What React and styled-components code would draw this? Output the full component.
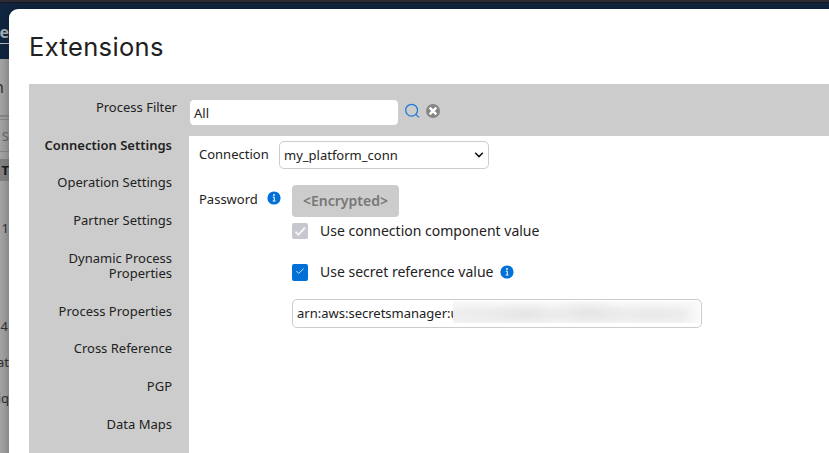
import React from "react";
import styled, { createGlobalStyle, css } from "styled-components";

const GlobalStyle = createGlobalStyle`
  * { box-sizing: border-box; }
  body { margin: 0; overflow: hidden; font-family: "Noto Sans", sans-serif; color: #222; }
`;

const Page = styled.div`
  position: relative;
  width: 829px;
  height: 453px;
  overflow: hidden;
  background: #a3a3a3;
`;

const TopBar = styled.div`
  height: 59px;
  padding-top: 22px;
  background: #10253f;
  border-top: 2px solid #2c2b36;
  box-shadow: inset 0 1px #17171b;
`;

const ActiveTab = styled.div`
  width: 9px;
  height: 20px;
  display: flex;
  justify-content: flex-end;
  border-bottom: 1px solid #b6bac0;
  color: #a7aaaf;
  font-size: 16px;
  font-weight: 700;
  line-height: 16px;
`;

const BackContent = styled.div`
  width: 9px;
  height: 394px;
  background: linear-gradient(90deg, #a3a3a3, #989898);
`;

const BackLine = styled.div`
  display: flex;
  justify-content: flex-end;
  align-items: center;
  height: ${(p) => p.$h}px;
  padding-right: ${(p) => p.$right || 0}px;
  font-size: ${(p) => p.$size || 13}px;
  font-weight: ${(p) => (p.$bold ? 700 : 400)};
  color: ${(p) => p.$color || "#303030"};
  background: ${(p) => p.$bg || "transparent"};
  ${(p) => p.$framed && css`
    border-top: 1px solid #858585;
    border-bottom: 1px solid #858585;
  `}
`;

const Dialog = styled.section`
  position: absolute;
  left: 9px;
  top: 9px;
  width: 830px;
  height: 460px;
  padding: 17px 0 0 20px;
  background: #fff;
  border-radius: 9px;
  box-shadow: 0 0 8px rgba(0, 0, 0, 0.22);
`;

const Title = styled.h1`
  margin: 0;
  height: 58px;
  font: 400 25.5px/42px Inter, sans-serif;
  letter-spacing: 0.36px;
  color: #202020;
`;

const Panel = styled.div`
  display: grid;
  grid-template-columns: 160px 1fr;
  grid-template-rows: 52px 1fr;
  height: 380px;
  background: #ccc;
`;

const FilterLabel = styled.label`
  justify-self: end;
  margin: 16px 12px 0 0;
  font-size: 13px;
  line-height: 15px;
`;

const FilterBar = styled.div`
  display: flex;
  align-items: flex-start;
  padding-top: 15px;
`;

const FilterInput = styled.div`
  width: 210px;
  height: 27px;
  padding: 2px 4px 0;
  border: 1px solid #ccc;
  border-radius: 5px;
  background: #fff;
  font-size: 13px;
  line-height: 23px;
`;

const SideNav = styled.nav`
  display: flex;
  flex-direction: column;
  align-items: flex-end;
  gap: 22.75px;
  padding: 1.6px 17px 0 0;
`;

const NavItem = styled.a`
  width: 140px;
  text-align: right;
  font-size: 13px;
  line-height: 15px;
  font-weight: ${(p) => (p.$active ? 600 : 400)};
`;

const Form = styled.main`
  padding: 5px 0 0 10px;
  background: #fff;
  font-size: 13px;
`;

const ConnectionRow = styled.div`
  display: flex;
  align-items: flex-start;
  height: 44px;
`;

const FieldLabel = styled.label`
  width: ${(p) => p.$w}px;
  padding-top: ${(p) => p.$top}px;
  line-height: 18px;
`;

const Select = styled.div`
  display: flex;
  justify-content: space-between;
  align-items: center;
  width: 210px;
  height: 28px;
  padding: 0 4px;
  border: 1px solid #ccc;
  border-radius: 5px;
  line-height: 16px;
`;

const PasswordRow = styled.div`
  display: flex;
  align-items: flex-start;
`;

const InfoSlot = styled.span`
  display: flex;
  width: 25px;
  padding-top: 6px;
`;

const Fields = styled.div`
  display: flex;
  flex-direction: column;
  align-items: flex-start;
`;

const EncryptedButton = styled.button`
  width: 107px;
  height: 32px;
  padding: 0;
  border: 0;
  border-radius: 4px;
  background: #ccc;
  color: #777;
  font: 600 14px/32px "Noto Sans", sans-serif;
`;

const CheckRow = styled.label`
  display: flex;
  align-items: center;
  height: 20px;
  margin-top: ${(p) => p.$mt}px;
  font-size: 14px;
`;

const CheckBox = styled.span`
  display: flex;
  width: 16px;
  height: ${(p) => (p.$disabled ? 16 : 17)}px;
  margin-right: 12px;
  border-radius: 2px;
  background: ${(p) => (p.$disabled ? "#c6c7cf" : "#0370d8")};
`;

const CheckText = styled.span`
  margin-right: 7px;
  padding-bottom: 2px;
`;

const SecretInput = styled.div`
  display: flex;
  align-items: center;
  width: 410px;
  height: 29px;
  margin-top: 17px;
  padding-left: 4px;
  border: 1px solid #ccc;
  border-radius: 5px;
`;

const SecretText = styled.span`
  width: 156px;
  padding-bottom: 2px;
  line-height: 16px;
  white-space: nowrap;
`;

const Redaction = styled.span`
  position: relative;
  width: 247px;
  height: 22px;
  margin-top: -3px;
  background:
    linear-gradient(90deg, transparent 93%, #fafafa),
    radial-gradient(ellipse 45px 12px at 73px 13px, #e5e5e5, transparent),
    radial-gradient(ellipse 42px 13px at 135px 12px, #e5e5e5, transparent),
    radial-gradient(ellipse 65px 11px at 200px 13px, #e9e9e9, transparent),
    radial-gradient(ellipse 48px 12px at 25px 13px, #ececec, transparent),
    linear-gradient(#f9f9f9, #f0f0f0 60%, #f4f4f4);
`;

const FilterIcons = styled.div`
  display: flex;
  gap: 6px;
  padding: 4px 0 0 6px;
`;

const Info = () => (
  <svg width="14" height="14" viewBox="0 0 14 14">
    <circle cx="7" cy="7" r="6.6" fill="#0370d8" />
    <circle cx="7" cy="4" r="0.9" fill="#fff" />
    <path d="M5.8 6.2h1.5v3.7M5.7 10h2.8" fill="none" stroke="#fff" strokeWidth="1" />
  </svg>
);

const NAV = [
  "Connection Settings", "Operation Settings", "Partner Settings",
  "Dynamic Process Properties", "Process Properties", "Cross Reference", "PGP", "Data Maps",
];

export default function App() {
  return (
    <Page>
      <GlobalStyle />
      <TopBar><ActiveTab>e</ActiveTab></TopBar>
      <BackContent>
        <BackLine $h={56} $size={16} $right={5}>n</BackLine>
        <BackLine $h={2} $bg="#858585" />
        <BackLine $h={2} />
        <BackLine $h={33} $framed $color="#686868" $right={-1}>S</BackLine>
        <BackLine $h={7} />
        <BackLine $h={22} $bold $bg="#818181" $color="#1b1b1b" $right={-1}>T</BackLine>
        <BackLine $h={94} $right={0}>1</BackLine>
        <BackLine $h={102} $right={1}>4</BackLine>
        <BackRows>
          <BackLine $h={36}>at</BackLine>
          <BackLine $h={36}>iq</BackLine>
        </BackRows>
      </BackContent>
      <Dialog>
        <Title>Extensions</Title>
        <Panel>
          <FilterLabel>Process Filter</FilterLabel>
          <FilterBar>
            <FilterInput>All</FilterInput>
            <FilterIcons>
              <svg width="15" height="16" viewBox="0 0 15 16" fill="none" stroke="#1b78d4" strokeWidth="1.2">
                <circle cx="6.6" cy="7.2" r="5.9" />
                <path d="M10.8 11.4l3.2 3" />
              </svg>
              <svg width="15" height="16" viewBox="0 0 15 16">
                <circle cx="7" cy="8" r="7" fill="#858585" />
                <path d="M3.7 4.7l6.6 6.6M10.3 4.7l-6.6 6.6" stroke="#fff" strokeWidth="2.4" />
              </svg>
            </FilterIcons>
          </FilterBar>
          <SideNav>
            {NAV.map((name, i) => <NavItem key={name} $active={i === 0}>{name}</NavItem>)}
          </SideNav>
          <Form>
            <ConnectionRow>
              <FieldLabel $w={80} $top={4}>Connection</FieldLabel>
              <Select>
                my_platform_conn
                <svg width="10" height="8" viewBox="0 0 10 8">
                  <path d="M1.2 1.8L5 5.6l3.8-3.8" fill="none" stroke="#111" strokeWidth="1.5" />
                </svg>
              </Select>
            </ConnectionRow>
            <PasswordRow>
              <FieldLabel $w={68} $top={5}>Password</FieldLabel>
              <InfoSlot><Info /></InfoSlot>
              <Fields>
                <EncryptedButton>&lt;Encrypted&gt;</EncryptedButton>
                <CheckRow $mt={4}>
                  <CheckBox $disabled>
                    <svg width="16" height="16" viewBox="0 0 16 16">
                      <path d="M3.4 8.6l3 3.2L13 4.5" fill="none" stroke="#f4f4f6" strokeWidth="2" />
                    </svg>
                  </CheckBox>
                  <CheckText>Use connection component value</CheckText>
                </CheckRow>
                <CheckRow $mt={21}>
                  <CheckBox>
                    <svg width="16" height="16" viewBox="0 0 16 16">
                      <path d="M4.3 7l2.4 2.4L11.6 4.6" fill="none" stroke="#d8ebff" strokeWidth="0.9" />
                    </svg>
                  </CheckBox>
                  <CheckText>Use secret reference value</CheckText>
                  <Info />
                </CheckRow>
                <SecretInput>
                  <SecretText>arn:aws:secretsmanager:us</SecretText>
                  <Redaction />
                </SecretInput>
              </Fields>
            </PasswordRow>
          </Form>
        </Panel>
      </Dialog>
    </Page>
  );
}

const BackRows = styled.div`
  margin-top: -33px;
`;
